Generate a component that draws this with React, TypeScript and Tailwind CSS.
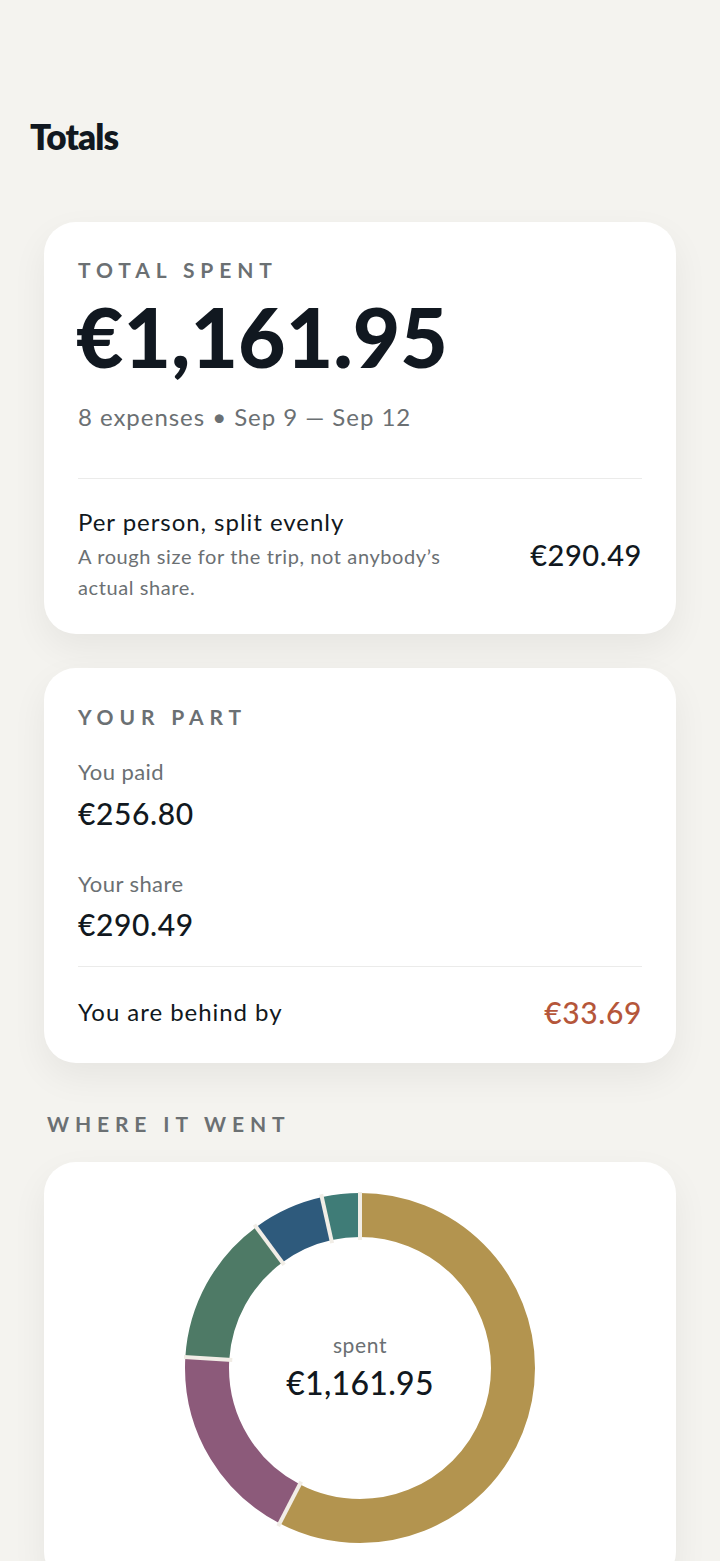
import React from 'react';

const segments = [
  { pct: 0.576, color: '#b3944f' },
  { pct: 0.184, color: '#8c5a7a' },
  { pct: 0.139, color: '#4e7a66' },
  { pct: 0.066, color: '#2e5a7c' },
  { pct: 0.035, color: '#3f7c77' },
];

function Donut() {
  const size = 352;
  const c = size / 2;
  const r = 153;
  const circ = 2 * Math.PI * r;
  let acc = 0;
  const arcs = segments.map((s, i) => {
    const len = s.pct * circ;
    const el = (
      <circle
        key={i}
        cx={c}
        cy={c}
        r={r}
        fill="none"
        stroke={s.color}
        strokeWidth={44}
        strokeDasharray={`${len} ${circ - len}`}
        strokeDashoffset={-acc}
        transform={`rotate(-90 ${c} ${c})`}
      />
    );
    acc += len;
    return el;
  });

  // separators between slices
  let a = 0;
  const lines = segments.map((s, i) => {
    const ang = a * 2 * Math.PI - Math.PI / 2;
    a += s.pct;
    const x1 = c + Math.cos(ang) * 128;
    const y1 = c + Math.sin(ang) * 128;
    const x2 = c + Math.cos(ang) * 178;
    const y2 = c + Math.sin(ang) * 178;
    return <line key={i} x1={x1} y1={y1} x2={x2} y2={y2} stroke="#f1ede6" strokeWidth={4} />;
  });

  return (
    <div className="relative w-[352px] h-[352px] mx-auto">
      <svg width={size} height={size} viewBox={`0 0 ${size} ${size}`}>
        {arcs}
        {lines}
      </svg>
      <div className="absolute inset-0 flex flex-col items-center justify-center">
        <span className="text-[21px] leading-[28px] tracking-[0.03em] text-[#6b7073] -mt-[2px]">spent</span>
        <span className="mt-[4px] text-[32px] leading-[40px] font-medium tracking-[0.01em] text-[#111820]">€1,161.95</span>
      </div>
    </div>
  );
}

export default function App() {
  return (
    <div className="min-h-screen bg-[#f4f3ef] font-['Lato',sans-serif] text-[#111820] pb-10">
      <div className="pt-[116px] px-[30px]">
        <h1 className="text-[35px] leading-[40px] font-extrabold tracking-tight">Totals</h1>
      </div>

      <div className="px-[44px] mt-[66px] flex flex-col">
        {/* total spent */}
        <div className="bg-white rounded-[32px] shadow-[0_14px_36px_rgba(0,0,0,0.06)] px-[34px] pt-[36px] pb-[31px]">
          <p className="text-[21px] leading-[24px] font-bold tracking-[0.28em] text-[#6b7073]">TOTAL SPENT</p>
          <p className="mt-[14px] -ml-[2px] text-[82px] leading-[80px] font-black">€1,161.95</p>
          <p className="mt-[26px] text-[24px] leading-[30px] tracking-[0.04em] text-[#6b7073]">8 expenses • Sep 9 — Sep 12</p>
          <div className="mt-[46px] border-t border-[#ebebea]" />
          <div className="pt-[28px] flex items-center justify-between gap-6">
            <div className="flex-1">
              <p className="text-[24px] leading-[30px] tracking-[0.04em]">Per person, split evenly</p>
              <p className="mt-[4px] text-[20px] leading-[31px] tracking-[0.03em] text-[#6b7073] max-w-[400px]">
                A rough size for the trip, not anybody’s actual share.
              </p>
            </div>
            <p className="text-[29px] leading-[34px] font-medium tracking-[0.02em]">€290.49</p>
          </div>
        </div>

        {/* your part */}
        <div className="mt-[34px] bg-white rounded-[32px] shadow-[0_14px_36px_rgba(0,0,0,0.06)] px-[34px] pt-[37px] pb-[36px]">
          <p className="text-[21px] leading-[24px] font-bold tracking-[0.28em] text-[#6b7073]">YOUR PART</p>
          <p className="mt-[29px] text-[22px] leading-[28px] tracking-[0.02em] text-[#6b7073]">You paid</p>
          <p className="mt-[9px] text-[30px] leading-[36px] font-medium tracking-[0.02em]">€256.80</p>
          <p className="mt-[39px] text-[22px] leading-[28px] tracking-[0.02em] text-[#6b7073]">Your share</p>
          <p className="mt-[8px] text-[30px] leading-[36px] font-medium tracking-[0.02em]">€290.49</p>
          <div className="mt-[24px] border-t border-[#ebebea]" />
          <div className="pt-[30px] flex items-center justify-between">
            <p className="text-[24px] leading-[30px] tracking-[0.04em]">You are behind by</p>
            <p className="text-[30px] leading-[30px] font-medium tracking-[0.02em] text-[#b5563a]">€33.69</p>
          </div>
        </div>

        <p className="mt-[49px] pl-[3px] text-[21px] leading-[24px] font-bold tracking-[0.28em] text-[#6b7073]">WHERE IT WENT</p>

        {/* breakdown */}
        <div className="mt-[26px] bg-white rounded-[32px] shadow-[0_14px_36px_rgba(0,0,0,0.06)] pt-[30px] pb-[40px]">
          <Donut />
        </div>
      </div>
    </div>
  );
}
